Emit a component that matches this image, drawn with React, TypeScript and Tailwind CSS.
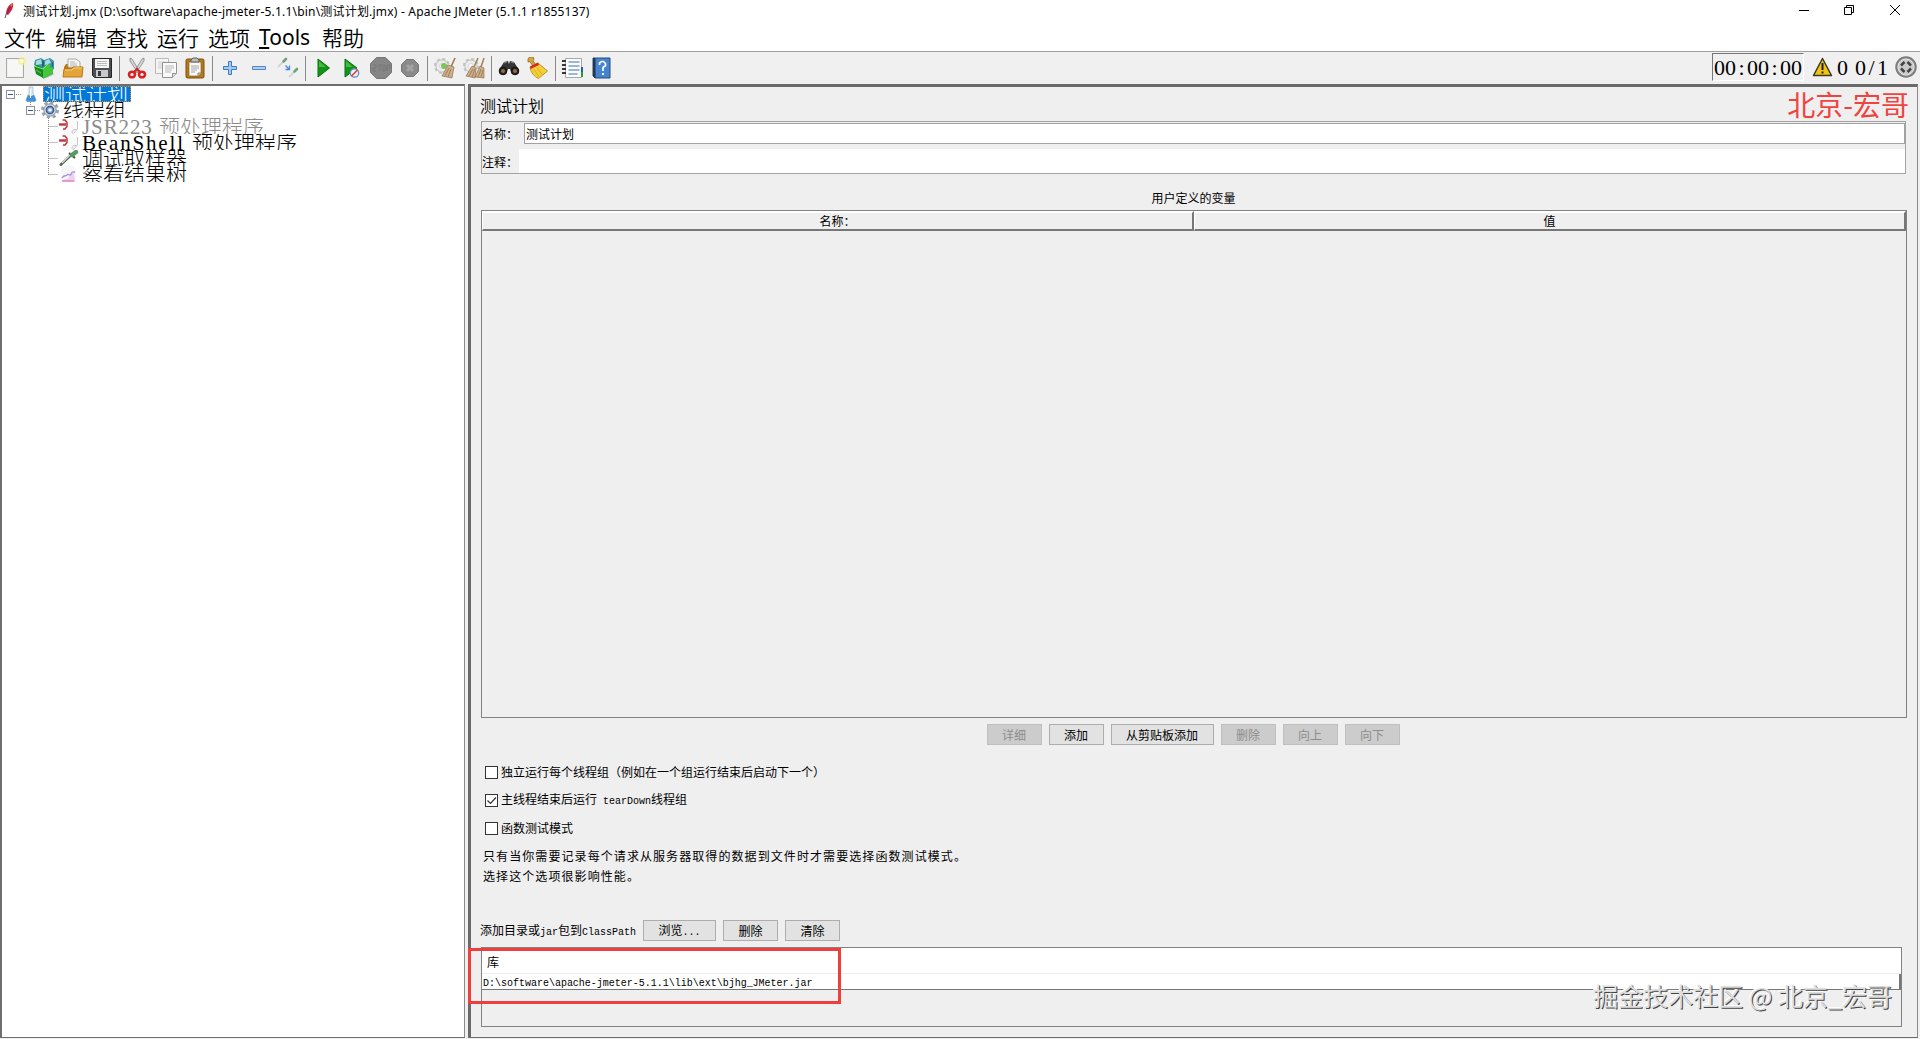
import type { ReactNode } from 'react'

const MONO = "text-[0.8333em] font-['Liberation_Mono',monospace]"

// Latin runs are set at half the width of a Chinese character
const Mixed = ({ text, latin = MONO }: { text: string; latin?: string }) => (
  <span>
    {text.split(/([\x20-\x7e]+)/).map((part, i) =>
      i % 2 ? (
        <span key={i} className={`${latin} whitespace-pre`}>{part}</span>
      ) : (
        <span key={i} className="font-['Noto_Sans_CJK_SC',sans-serif]">{part}</span>
      )
    )}
  </span>
)

const Icon = ({ children, size = 22 }: { children: ReactNode; size?: number }) => (
  <svg width={size} height={size} viewBox="0 0 22 22" fill="none" className="shrink-0">
    {children}
  </svg>
)

/* ====== Toolbar icons ====== */
const NewIcon = () => (
  <Icon>
    <rect x="2.5" y="1.5" width="17" height="19" fill="#f1f1ef" stroke="#a9a9a7" />
    <path d="M4 3h14v16H4z" fill="#f7f7f5" />
    <circle cx="18" cy="4" r="4" fill="#f7ef8a" opacity=".7" />
    <circle cx="18" cy="4" r="2" fill="#fffbd0" />
  </Icon>
)

const TemplatesIcon = () => (
  <Icon>
    <path d="M1 8l1-5 6-2 3 2 6-2 4 3v8l-3 2z" fill="#3f93a6" />
    <path d="M3 4l5-2 1 5-6 1zM12 4l4-2 2 4-6 2z" fill="#a9dbe2" />
    <path d="M9 3l2 1v5l-2 1zM19 5l1 1v5l-1 1z" fill="#1f6577" />
    <path d="M1 9l3-1 6 3v10l-7-4z" fill="#128a20" />
    <path d="M10 11l5-4 2 1v3l3-1v7l-10 5z" fill="#45c838" />
    <path d="M1 9l9 3 5-5" stroke="#8ae979" />
    <path d="M3 12l5 3v2l-5-3z" fill="#4cb04f" />
    <path d="M19 16l3 1-8 4h-4z" fill="#777" opacity=".3" />
  </Icon>
)

const OpenIcon = () => (
  <Icon>
    <path d="M2 10l2-3h4l1 2h10v5H2z" fill="#b9780e" />
    <path d="M6 10V2h8l4 3v7z" fill="#f6f6f3" stroke="#a8a8a5" />
    <path d="M8 5h5M8 7h7M8 9h7" stroke="#b5b5b5" />
    <path d="M2 12h7l2-2h10l-1 10H1z" fill="#e3a53a" stroke="#b77a16" />
    <path d="M3 13h7l2-2h8" stroke="#f7d17c" />
  </Icon>
)

const SaveIcon = () => (
  <Icon>
    <path d="M1.5 1.5h19v19h-17l-2-2z" fill="#4d4f52" stroke="#242629" />
    <rect x="4" y="2" width="14" height="9" fill="#f5f5f5" />
    <path d="M6 4.5h10M6 6.5h10M6 8.5h10" stroke="#bbb" />
    <rect x="5" y="13" width="12" height="7" fill="#c9cacb" />
    <rect x="7" y="14" width="3" height="5" fill="#393b3e" />
  </Icon>
)

const CutIcon = () => (
  <Icon>
    <path d="M4 1l2 1 8 13-2 1L4 4zM18 1l-2 1-8 13 2 1 8-12z" fill="#d4d4d2" stroke="#858585" strokeWidth=".8" />
    <ellipse cx="6" cy="17.5" rx="3" ry="2.8" stroke="#d62224" strokeWidth="2.6" />
    <ellipse cx="16" cy="17.5" rx="3" ry="2.8" stroke="#d62224" strokeWidth="2.6" />
    <path d="M8 15l3-3 3 3" stroke="#d62224" strokeWidth="2" />
  </Icon>
)

const CopyIcon = () => (
  <Icon>
    <path d="M.5 1.5h13v15H.5z" fill="#f4f4f4" stroke="#bababa" />
    <path d="M3 5h8M3 7h8M3 9h5M3 11h4" stroke="#d0d0d0" />
    <path d="M7.5 5.5h14v11l-4 4h-10z" fill="#fafafa" stroke="#929292" />
    <path d="M10 9h9M10 11h9M10 13h7M10 15h6" stroke="#b8b8b8" />
    <path d="M17.5 20.5v-4h4" fill="#ddd" stroke="#929292" />
  </Icon>
)

const PasteIcon = () => (
  <Icon>
    <rect x="2" y="2" width="18" height="19" rx="1.5" fill="#b67815" stroke="#80500a" />
    <path d="M5 5h12v11l-3 3H5z" fill="#fafafa" stroke="#87622a" strokeWidth=".7" />
    <path d="M7 9h8M7 11h8M7 13h6M7 15h4" stroke="#a5a5a5" />
    <path d="M7 5V3l2-2h4l2 2v2z" fill="#bdbdbb" stroke="#5f5f5e" />
    <path d="M14 19v-3h3" fill="#ccc" stroke="#888" />
  </Icon>
)

const PlusIcon = () => (
  <Icon>
    <path d="M9.5 4.5h3v5h5v3h-5v5h-3v-5h-5v-3h5z" fill="#a3c9f3" stroke="#4379bf" />
  </Icon>
)

const MinusIcon = () => (
  <Icon>
    <path d="M4.5 9.5h13v3h-13z" fill="#b0cff3" stroke="#5684c4" />
  </Icon>
)

const ToggleIcon = () => (
  <Icon>
    <path d="M1 10l6-6" stroke="#cfd6d7" strokeWidth="1.8" />
    <path d="M6.5 4.5l2.5-2.5" stroke="#6fa377" strokeWidth="2.6" strokeLinecap="round" />
    <path d="M8.5 8.5l4 4m0-4v4H8.5" stroke="#4488dc" strokeWidth="1.3" />
    <path d="M12 20l5-5" stroke="#cfd6d7" strokeWidth="1.8" />
    <path d="M17.5 14.5l2.5-2.5" stroke="#6fa377" strokeWidth="2.6" strokeLinecap="round" />
  </Icon>
)

const StartIcon = () => (
  <Icon>
    <path d="M6 2v18l11.500-9z" fill="#12941b" stroke="#087010" />
    <path d="M7 4v6h7z" fill="#43bb3d" />
  </Icon>
)

const StartNoPauseIcon = () => (
  <Icon>
    <path d="M4 2v18l12-9z" fill="#12941b" stroke="#087010" />
    <path d="M5 4v6h7z" fill="#43bb3d" />
    <circle cx="13.5" cy="16" r="4.2" fill="#eef0f5" stroke="#688bc0" strokeWidth="1.3" />
    <path d="M10.5 19l6-6" stroke="#df4444" strokeWidth="1.7" />
  </Icon>
)

const StopIcon = () => (
  <Icon>
    <path d="M6.5.5h9l6 6v9l-6 6h-9l-6-6v-9z" fill="#868686" stroke="#777" />
    <path d="M3 8h3v3H3v3h3M8 8h4M10 8v6M13 8h2v6h-2zM17 14V8h3v3h-3" stroke="#777" />
  </Icon>
)

const ShutdownIcon = () => (
  <Icon>
    <path d="M7.5 2.5h7l5 5v7l-5 5h-7l-5-5v-7z" fill="#8a8a8a" stroke="#777" />
    <path d="M8 8l6 6M14 8l-6 6" stroke="#a3a3a3" strokeWidth="3" />
  </Icon>
)

const Gear = () => (
  <>
    <circle cx="8" cy="9" r="7" fill="#e3e3e3" stroke="#c2c2c2" strokeWidth="2" strokeDasharray="3 2.5" />
    <circle cx="8" cy="9" r="6" fill="#ececec" stroke="#bdbdbd" strokeWidth=".8" />
    <circle cx="8" cy="9" r="2.5" fill="#fafafa" stroke="#c4c4c4" strokeWidth=".6" />
  </>
)

const ClearIcon = () => (
  <Icon>
    <Gear />
    <circle cx="10" cy="9" r="3" fill="#7cc45c" />
    <path d="M21 1l-4 9" stroke="#9b7249" strokeWidth="1.5" />
    <path d="M14 8l6 2-2 11-10-2z" fill="#cdb08a" stroke="#957050" strokeWidth=".7" />
    <path d="M15 11l-4 8M17 12l-3 8" stroke="#a08060" />
  </Icon>
)

const ClearAllIcon = () => (
  <Icon>
    <Gear />
    <path d="M15 1l-4 9M21 1l-3 9" stroke="#a57f58" strokeWidth="1.5" />
    <path d="M9 9l4 2-1 10-9-2zM17 9l4 2v10l-9-1z" fill="#cdb08a" stroke="#957050" strokeWidth=".7" />
    <path d="M10 12l-4 7M12 12l-3 8M18 12l-3 8M20 13l-2 7" stroke="#a08060" />
  </Icon>
)

const SearchIcon = () => (
  <Icon>
    <path d="M6 5l4-1 1 3 1-3 4 1 5 8-1 4h-6l-2-5h-2l-2 5H2l-1-4z" fill="#353535" />
    <path d="M6 6l3-1M13 5l3 1" stroke="#888" />
    <circle cx="5" cy="14" r="3.8" fill="#252525" stroke="#111" />
    <circle cx="17" cy="14" r="3.8" fill="#252525" stroke="#111" />
    <circle cx="5" cy="14" r="2" fill="#9b6a40" />
    <circle cx="17" cy="14" r="2" fill="#9b6a40" />
  </Icon>
)

const BroomIcon = () => (
  <Icon>
    <path d="M1 1.5L3 0h3l1 2-1 2 3 4-3 1.500-3-5-2 .5z" fill="#d9a53c" stroke="#946617" strokeWidth=".8" />
    <path d="M3 10l8-4 9.500 8-9 7.500c-4-2-7.500-5-8.500-11.500z" fill="#f3cf36" stroke="#b18414" strokeWidth=".8" />
    <path d="M3 9.5l8-4 1 2.500-8.500 4z" fill="#d52b22" />
    <path d="M7 12.5l5 7M10 11l5 6" stroke="#d9b02a" />
  </Icon>
)

const FunctionIcon = () => (
  <Icon>
    <path d="M3.5 1.5h16v19h-16z" fill="#fbfbfb" stroke="#a8a8a8" />
    <path d="M6.5 5h11M6.5 9h11M6.5 13h11M6.5 17h9" stroke="#3b74b7" strokeWidth="1.2" />
    <path d="M0 4h4M0 8h4M0 12h4M0 16h4" stroke="#363636" strokeWidth="1.8" />
    <path d="M19 10h2v5h-2z" fill="#255aa8" />
    <path d="M19 15h2v5h-2z" fill="#269d38" />
  </Icon>
)

const HelpIcon = () => (
  <Icon>
    <path d="M2 1h17v20H4l-2-2z" fill="#4585cf" stroke="#294c76" />
    <path d="M2 1h2.500v20L2 19z" fill="#27374a" />
    <path d="M8.500 8V6l2-1.500h2l2 2v2l-2.500 2V14" stroke="#fff" strokeWidth="1.700" />
    <path d="M12 16v2" stroke="#fff" strokeWidth="2" />
  </Icon>
)

/* ====== Tree icons ====== */
const FlaskIcon = () => (
  <svg width="12" height="16" viewBox="0 0 12 16" fill="none">
    <path d="M4 1v6L.8 14l1 1.500h8.400l1-1.500L8 7V1z" fill="#dae9f7" stroke="#9ab4cd" strokeWidth=".7" />
    <path d="M3 9l-2 5 1 1.500h8l1-1.500-2-5-3 1z" fill="#3f8fd5" />
    <path d="M5.500 3v9" stroke="#fff" />
  </svg>
)

const ThreadGroupIcon = () => (
  <svg width="20" height="16" viewBox="0 0 20 16" fill="none">
    <circle cx="10" cy="8" r="7.5" stroke="#9aa4ae" strokeWidth="3" strokeDasharray="3.2 2.69" />
    <circle cx="10" cy="8" r="6.2" fill="#ccd4dc" stroke="#8b959f" />
    <circle cx="10" cy="8" r="3.7" fill="#6f9bd8" stroke="#3d5882" strokeWidth="1.2" />
    <circle cx="10" cy="8" r="1.8" fill="#eef6ff" />
  </svg>
)

const PreProcessorIcon = () => (
  <svg width="20" height="16" viewBox="0 0 20 16" fill="none">
    <path d="M4 0h15v12l-5 4H4z" fill="#fafafa" />
    <path d="M18.500 3v8l-4 4.500c-2 0-2-3 .5-4h3" fill="#f2f2f2" stroke="#c9c9c9" />
    <path d="M0 6.500h7" stroke="#c1353c" strokeWidth="2.400" />
    <path d="M3.500 2H6l2 2.500v4L6 11H4" stroke="#c1353c" strokeWidth="1.500" />
  </svg>
)

const SamplerIcon = () => (
  <svg width="20" height="16" viewBox="0 0 20 16" fill="none">
    <path d="M1 15.500L12 5" stroke="#57635a" strokeWidth="2.600" />
    <path d="M3 13l8-8" stroke="#d5dfd6" strokeWidth="1.200" />
    <path d="M10 3l6 5" stroke="#36573b" strokeWidth="2" />
    <path d="M13 5l4-3" stroke="#5b9a60" strokeWidth="4.500" strokeLinecap="round" />
  </svg>
)

const ListenerIcon = () => (
  <svg width="20" height="16" viewBox="0 0 20 16" fill="none">
    <path d="M2 0h12l3 3v13H2z" fill="#f6f5f8" />
    <path d="M3 16c2-5 5-1 7-5s4-3 5-5l1 10z" fill="#eed0ef" />
    <path d="M3 12c2-4 4-1 5-3s3 2 4-1 2-2 4-2" stroke="#a98bd8" strokeWidth="1.300" />
    <path d="M3 15h12" stroke="#df86d0" strokeWidth="1.500" />
  </svg>
)

const toolbar = [
  [NewIcon, TemplatesIcon, OpenIcon, SaveIcon],
  [CutIcon, CopyIcon, PasteIcon],
  [PlusIcon, MinusIcon, ToggleIcon],
  [StartIcon, StartNoPauseIcon, StopIcon, ShutdownIcon],
  [ClearIcon, ClearAllIcon],
  [SearchIcon, BroomIcon],
  [FunctionIcon, HelpIcon],
]

const menus = ['文件', '编辑', '查找', '运行', '选项', 'Tools', '帮助']

const leaves = [
  { label: 'JSR223 预处理程序', icon: PreProcessorIcon, disabled: true, latin: "font-['Liberation_Serif',serif] tracking-[0.9px]" },
  { label: 'BeanShell 预处理程序', icon: PreProcessorIcon, latin: "font-['Liberation_Serif',serif] tracking-[1.84px]" },
  { label: '调试取样器', icon: SamplerIcon },
  { label: '察看结果树', icon: ListenerIcon },
]

const options = [
  { label: '独立运行每个线程组（例如在一个组运行结束后启动下一个）', checked: false },
  { label: '主线程结束后运行 tearDown线程组', checked: true },
  { label: '函数测试模式', checked: false },
]

const Button = ({ label, width = 'w-[55px]', disabled = false }: { label: string; width?: string; disabled?: boolean }) => (
  <button
    disabled={disabled}
    className={`${width} h-[21px] flex items-center justify-center border text-xs leading-none pt-px ${
      disabled ? 'bg-[#cccccc] border-[#bfbfbf] text-[#8c8c8c]' : 'bg-[#e2e2e2] border-[#adadad] text-black'
    }`}
  >
    <Mixed text={label} />
  </button>
)

const TitleBar = () => (
  <div className="h-6 flex items-start bg-white shrink-0">
    <svg width="23" height="22" viewBox="0 0 23 22" fill="none" className="shrink-0">
      <path d="M5 18l1.500-5" stroke="#555" />
      <path d="M6 14c0-5 3-10 7-11 1 3-1 8-5 12z" fill="#c9243d" />
      <path d="M7 14c1-4 3-7 5-10" stroke="#7b2a66" />
      <path d="M10 5l3-2-1 4z" fill="#e67a2c" />
    </svg>
    <span className="h-6 leading-6 text-xs whitespace-nowrap tracking-[0.2px] font-['Noto_Sans','Noto_Sans_CJK_SC',sans-serif]">
      测试计划.jmx (D:\software\apache-jmeter-5.1.1\bin\测试计划.jmx) - Apache JMeter (5.1.1 r1855137)
    </span>
    <svg width="121" height="22" viewBox="0 0 121 22" fill="none" stroke="#000" className="ml-auto shrink-0">
      <path d="M0 10.500h10" />
      <path d="M45.500 7.500h7v7h-7zM47.500 7.500v-2h7v7h-2" />
      <path d="M91 5l10 10M101 5L91 15" />
    </svg>
  </div>
)

// Colon and slash take a full digit cell
const Wide = ({ children }: { children: string }) => (
  <span className="inline-block w-[0.5em] text-center">{children}</span>
)

const StatusArea = () => (
  <div className="ml-auto flex items-center h-8 text-[22px] leading-[24px] whitespace-nowrap font-['Liberation_Serif',serif]">
    <div className="w-[92px] h-[28px] pt-px flex items-center justify-center border-t border-l border-[#777] border-r-white border-b-white border-r border-b mb-0.5">
      <span>00<Wide>:</Wide>00<Wide>:</Wide>00</span>
    </div>
    <svg width="21" height="20" viewBox="0 0 21 20" fill="none" className="ml-2 mb-0.5">
      <path d="M10.500 1.500l9 17h-18z" fill="#f3c313" stroke="#3c3921" strokeWidth="1.500" strokeLinejoin="round" />
      <path d="M10.500 6v7M10.500 14.500v2" stroke="#222" strokeWidth="2" />
    </svg>
    <span className="ml-1 w-[18px]">0</span>
    <span className="w-10">0<Wide>/</Wide>1</span>
    <svg width="22" height="22" viewBox="0 0 22 22" fill="none" className="mr-[3px] mb-0.5">
      <circle cx="11" cy="11" r="10" fill="#969696" stroke="#7a7a7a" strokeWidth="1.500" />
      <circle cx="11" cy="11" r="8" fill="#c9c9c9" stroke="#e4e4e4" />
      <path d="M6 9.500L9.500 6M12.500 6L16 9.500M16 12.500L12.500 16M9.500 16L6 12.500" stroke="#444" strokeWidth="2.500" />
    </svg>
  </div>
)

const Toolbar = () => (
  <div className="h-[33px] flex bg-[#f0f0f0] border-t border-[#a0a0a0] shrink-0">
    {toolbar.map((group, i) => (
      <div key={i} className="flex items-center">
        {i > 0 && <div className="w-1.5 h-[25px] flex justify-center"><div className="w-px bg-[#8a8a8a]" /></div>}
        {group.map((ToolIcon, j) => (
          <div key={j} className="w-[29px] flex justify-center"><ToolIcon /></div>
        ))}
      </div>
    ))}
    <StatusArea />
  </div>
)

const Expander = ({ x }: { x: number }) => (
  <>
    <rect x={x + 0.5} y="4.500" width="8" height="8" fill="#fafafa" stroke="#8c929c" />
    <path d={`M${x + 2} 8.500h5`} stroke="#39529b" />
  </>
)

const Tree = () => (
  <div className="w-[465px] h-full bg-white border-t-2 border-l-2 border-r border-b border-[#6e6e6e] border-r-[#8a8a8a] shrink-0 text-[21px] leading-4 font-light">
    <div className="h-4 flex">
      <svg width="23" height="16" fill="none">
        <Expander x={4} />
        <path d="M14 8.500h6" stroke="#888" strokeDasharray="1 1" />
      </svg>
      <FlaskIcon />
      <div className="ml-[6px] w-[88px] overflow-hidden bg-[#0078d7] text-white border border-dotted border-[#e08a30] leading-[12px] whitespace-nowrap">
        <Mixed text="测试计划" />
      </div>
    </div>
    <div className="h-4 flex">
      <svg width="38" height="16" fill="none">
        <path d="M28.500 0v4M33 8.500h5" stroke="#888" strokeDasharray="1 1" />
        <Expander x={24} />
      </svg>
      <ThreadGroupIcon />
      <div className="ml-[3px] h-4 overflow-hidden leading-[15px]"><Mixed text="线程组" /></div>
    </div>
    {leaves.map(({ label, icon: LeafIcon, disabled, latin }, i) => (
      <div key={label} className="h-4 flex">
        <svg width="57" height="16" fill="none">
          <path d={`M46.500 0v${i === leaves.length - 1 ? 9 : 16}M46.500 8.500h10`} stroke="#888" strokeDasharray="1 1" />
        </svg>
        <LeafIcon />
        <div className={`ml-[3px] h-4 overflow-hidden whitespace-nowrap leading-[15px] ${disabled ? 'text-[#8c8c8c]' : ''}`}>
          <Mixed text={label} latin={latin} />
        </div>
      </div>
    ))}
  </div>
)

const NamePanel = () => (
  <div className="mt-2 h-[53px] w-[1425px] border border-[#a3a3a3] flex flex-col text-xs shrink-0">
    <div className="h-[27px] flex pt-px">
      <label className="w-[42px] leading-[22px]"><Mixed text="名称：" /></label>
      <div className="flex-1 h-[21px] bg-white border border-[#a3a3a3] pl-px leading-5">
        <Mixed text="测试计划" />
      </div>
    </div>
    <div className="h-6 flex">
      <label className="w-[37px] leading-[25px]"><Mixed text="注释：" /></label>
      <div className="flex-1 bg-white" />
    </div>
  </div>
)

const HeaderCell = ({ label }: { label: string }) => (
  <div className="flex-1 flex items-center justify-center border-t-2 border-l border-white border-b-2 border-r-2 border-b-[#777] border-r-[#777]">
    <Mixed text={label} />
  </div>
)

const VariablesTable = () => (
  <div className="w-[1426px] h-[508px] border border-[#828282] text-xs leading-none shrink-0">
    <div className="h-5 flex">
      <HeaderCell label="名称：" />
      <HeaderCell label="值" />
    </div>
  </div>
)

const ClassPath = () => (
  <>
    <div className="mt-[34px] -ml-px h-[21px] flex items-center gap-[7px] text-xs shrink-0">
      <span className="w-[156px] whitespace-nowrap leading-none pt-px"><Mixed text="添加目录或jar包到ClassPath" /></span>
      <Button label="浏览..." width="w-[73px]" />
      <Button label="删除" />
      <Button label="清除" />
    </div>
    <div className="relative mt-1.5 w-[1421px] h-20 border border-[#828282] text-xs shrink-0">
      <div className="h-[26px] bg-white border-b border-[#ededed] pl-[5px] leading-[28px]"><Mixed text="库" /></div>
      <div className="h-4 bg-white border-b border-[#777] border-r-2 pl-px leading-[14px]">
        <Mixed text="D:\software\apache-jmeter-5.1.1\lib\ext\bjhg_JMeter.jar" />
      </div>
      <div className="absolute -left-[14px] top-0 w-[373px] h-[56px] border-3 border-[#ee3f3d]" />
      <div className="absolute right-[9px] top-[31px] text-[25px] leading-[32px] whitespace-nowrap text-[#dedede] [text-shadow:1px_1px_0_#444,-1px_-1px_0_#fff] font-['Noto_Sans_CJK_SC',sans-serif]">
        掘金技术社区 @ 北京_宏哥
      </div>
    </div>
  </>
)

const TestPlanPanel = () => (
  <div className="relative flex-1 h-full ml-[3px] mr-0.5 flex flex-col pl-[10px] bg-[#efefef] border-t-3 border-l-3 border-r border-b border-[#6a6a6a] border-r-[#8a8a8a]">
    <h1 className="mt-[10px] -ml-px h-4 text-base leading-4 font-[350]"><Mixed text="测试计划" /></h1>
    <div className="absolute right-[8px] top-px text-[28px] leading-[32px] text-[#f04340] whitespace-nowrap font-['Noto_Sans_CJK_SC',sans-serif]">
      北京-宏哥
    </div>
    <NamePanel />
    <div className="h-9 w-[1425px] pt-[16px] text-center text-xs leading-4 shrink-0"><Mixed text="用户定义的变量" /></div>
    <VariablesTable />
    <div className="mt-1.5 w-[1424px] flex justify-center gap-[7px] shrink-0">
      <Button label="详细" disabled />
      <Button label="添加" />
      <Button label="从剪贴板添加" width="w-[103px]" />
      <Button label="删除" disabled />
      <Button label="向上" disabled />
      <Button label="向下" disabled />
    </div>
    <div className="mt-[13px] ml-1 text-xs shrink-0">
      {options.map(({ label, checked }) => (
        <label key={label} className="h-7 flex items-center gap-[3px] leading-none">
          <svg width="13" height="13" fill="none" className="shrink-0">
            <rect x=".5" y=".5" width="12" height="12" fill="#fff" stroke="#333" />
            {checked && <path d="M2.500 6.500l3 3 5.500-6" stroke="#333" strokeWidth="1.200" />}
          </svg>
          <span className="whitespace-nowrap"><Mixed text={label} /></span>
        </label>
      ))}
    </div>
    <p className="mt-1 ml-0.5 h-10 text-xs leading-5 tracking-[1.08px] shrink-0 font-['Noto_Sans_CJK_SC',sans-serif]">
      只有当你需要记录每个请求从服务器取得的数据到文件时才需要选择函数测试模式。
      <br />
      选择这个选项很影响性能。
    </p>
    <ClassPath />
  </div>
)

const App = () => (
  <div className="w-[1920px] h-[1039px] flex flex-col overflow-hidden bg-[#f0f0f0] text-black">
    <TitleBar />
    <div className="h-[27px] flex gap-[9px] pl-1 bg-white text-[21px] leading-[26px] shrink-0 font-['Noto_Sans','Noto_Sans_CJK_SC',sans-serif]">
      {menus.map((menu) =>
        menu === 'Tools' ? (
          <span key={menu} className="w-[54px]"><span className="underline underline-offset-2">T</span>ools</span>
        ) : (
          <span key={menu} className="font-[350] font-['Noto_Sans_CJK_SC',sans-serif]">{menu}</span>
        )
      )}
    </div>
    <Toolbar />
    <div className="h-[954px] flex shrink-0">
      <Tree />
      <TestPlanPanel />
    </div>
  </div>
)

export default App
